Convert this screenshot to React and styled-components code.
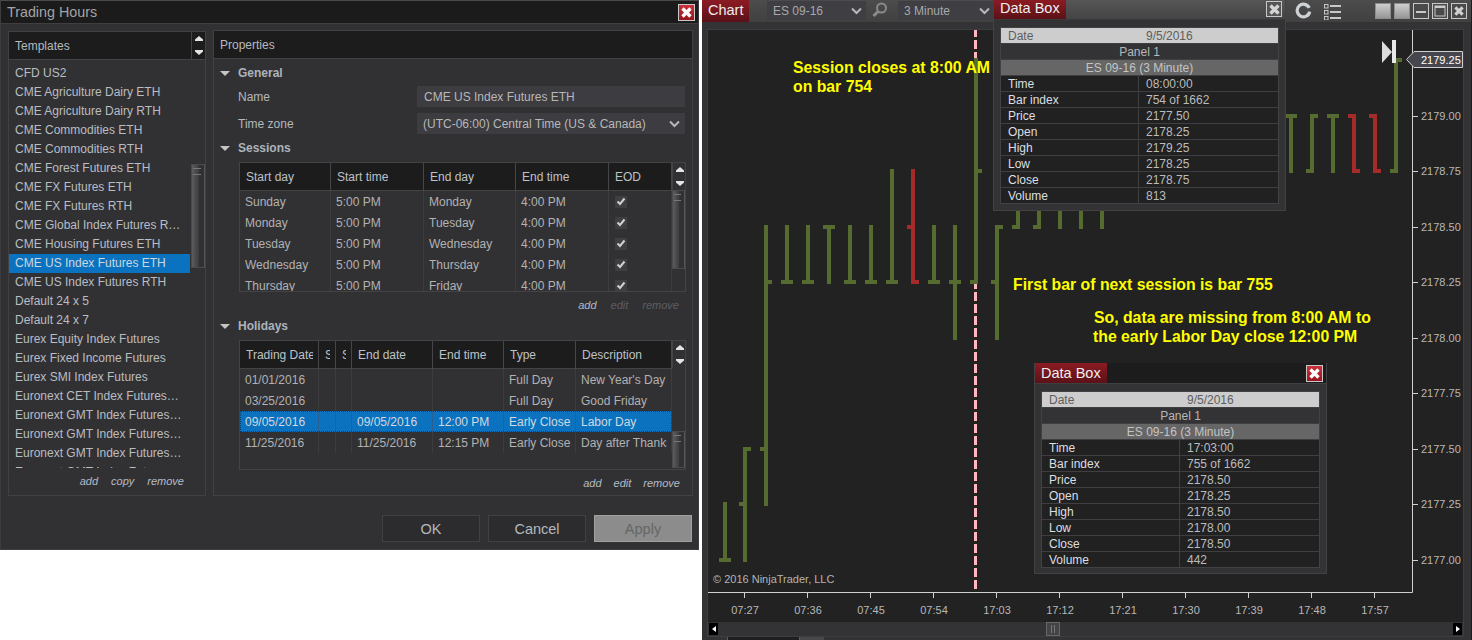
import React from 'react';
import styled, { createGlobalStyle } from 'styled-components';

const Global = createGlobalStyle`
  html, body { margin: 0; padding: 0; background: #fff; overflow: hidden; }
  body { font-family: "Liberation Sans", Arial, sans-serif; font-size: 12px; }
  * { box-sizing: border-box; }
`;

const Page = styled.div`
  display: flex; width: 1472px; height: 640px; gap: 3px; align-items: flex-start; background: #fff;
`;

/* ---------- dialog ---------- */
const Dialog = styled.div`
  width: 699px; height: 550px; background: #313134; display: flex; flex-direction: column;
  border: 1px solid #3d3d40; border-top-color: #4a4a4d;
`;
const TitleBar = styled.div`
  height: 23px; background: #1b1b1c; border-bottom: 1px solid #3f3f42; display: flex;
  align-items: center; justify-content: space-between; padding: 0 3px 0 6px;
  font-size: 14.3px; color: #a4a4a4;
`;
const CloseRed = styled.button`
  width: 17px; height: 17px; padding: 0; display: flex; align-items: center; justify-content: center;
  border: 1px solid #c9c9c9; background: linear-gradient(#c9303a, #98161f);
`;
const DialogBody = styled.div`
  display: flex; gap: 7px; padding: 6px 7px 0 7px; height: 468px; align-items: flex-start;
`;
const Panel = styled.div`
  border: 1px solid #414144; display: flex; flex-direction: column; flex: none; width: ${p => p.$w}px;
  height: ${p => p.$h}px; margin-top: ${p => p.$mt || 0}px;
`;
const PanelHead = styled.div`
  height: 28px; flex: none; background: #1c1c1d; border-bottom: 1px solid #434346; display: flex;
  align-items: center; justify-content: space-between; color: #b6babe; padding-left: 6px;
`;
const Spin = styled.div`
  width: 14px; height: 27px; border-left: 1px solid #434346; flex: none; display: flex;
  flex-direction: column; align-items: center; justify-content: center; gap: 9px;
`;
const TemplatesBody = styled.div`
  display: flex; height: 408px; flex: none;
`;
const TemplateList = styled.div`
  flex: 1; overflow: hidden; min-width: 0; padding: 4px 1px 0 0;
`;
const TemplateRow = styled.div`
  height: 19px; line-height: 18px; padding: 0 8px 0 6px; white-space: nowrap; overflow: hidden;
  text-overflow: ellipsis; color: ${p => (p.$sel ? '#cfd6de' : '#b9bdc1')};
  background: ${p => (p.$sel ? '#0b72c0' : 'transparent')};
`;
const ScrollCol = styled.div`
  width: ${p => p.$w || 14}px; flex: none; padding-top: ${p => p.$top}px;
`;
const Thumb = styled.div`
  height: ${p => p.$h}px; border: 1px solid #4a4a4d; border-right-color: #55555a; position: relative;
  background: linear-gradient(90deg, #5c5c5f, #3d3d40 55%, #313134 60%);
  &::before {
    content: ''; position: absolute; left: 1px; right: 3px; top: 3px; height: 5px;
    border-top: 1px solid #77777a; border-bottom: 1px solid #77777a;
  }
`;
const Links = styled.div`
  display: flex; justify-content: flex-end; align-items: center; height: ${p => p.$h}px; flex: none;
  gap: ${p => p.$gap}px; padding-right: ${p => p.$pr}px; font-size: 11px; font-style: italic;
`;
const LinkText = styled.span`
  color: ${p => (p.$off ? '#5e5e61' : '#b4bcc4')};
`;
const SectionLabel = styled.div`
  display: flex; align-items: center; height: ${p => p.$h}px; margin-top: ${p => p.$mt || 0}px; flex: none;
  padding-left: 6px; font-weight: bold; color: #adb3ba; gap: 8px;
`;
const Caret = styled.span`
  width: 0; height: 0; border-left: 5px solid transparent; border-right: 5px solid transparent;
  border-top: 5px solid #c4c4c4; flex: none;
`;
const FieldRow = styled.div`
  display: flex; align-items: center; height: 21px; margin-top: ${p => p.$mt}px; padding-left: 24px; flex: none;
  color: #b4b8bc;
`;
const FieldLabel = styled.div` width: 179px; flex: none; `;
const FieldBox = styled.div`
  width: 268px; height: 21px; background: #3c3c41; color: #b8b8b8; display: flex; align-items: center;
  justify-content: space-between; padding: 0 5px 0 ${p => p.$pl}px;
`;
const Table = styled.div`
  margin: ${p => p.$mt || 0}px 0 0 25px; width: 447px; height: 130px; border: 1px solid #434346; display: flex; flex: none;
`;
const TableMain = styled.div` width: 432px; flex: none; overflow: hidden; `;
const HeadRow = styled.div`
  display: grid; grid-template-columns: ${p => p.$cols}; height: 28px; background: #1c1c1d;
  border-bottom: 1px solid #434346;
`;
const HeadCell = styled.div`
  border-right: 1px solid #46464a; padding: 0 5px 0 6px; display: flex; align-items: center; color: #bcc2c8; min-width: 0;
`;
const Clip = styled.div` overflow: hidden; white-space: nowrap; width: 100%; `;
const BodyRow = styled.div`
  display: grid; grid-template-columns: ${p => p.$cols}; height: 21px;
  background: ${p => (p.$sel ? '#0b72c0' : 'transparent')};
  outline: ${p => (p.$sel ? '1px dotted #0a3f6c' : 'none')}; outline-offset: -1px;
`;
const BodyCell = styled.div`
  border-right: 1px solid ${p => (p.$sel ? '#2a5f8f' : '#3d3d40')}; padding: 0 4px 0 5px; display: flex; align-items: center;
  color: ${p => (p.$sel ? '#d2d8de' : '#b2b2b2')}; min-width: 0;
`;
const Check = styled.div`
  width: 12px; height: 12px; background: #3f3f43; margin-left: 1px; display: flex; align-items: center; justify-content: center;
`;
const TableScroll = styled.div` width: 13px; flex: none; display: flex; flex-direction: column; `;
const Footer = styled.div`
  display: flex; justify-content: flex-end; gap: 8px; padding: 23px 6px 0 0;
`;
const DlgButton = styled.div`
  width: 98px; height: 27px; display: flex; align-items: center; justify-content: center; font-size: 14.5px;
  border: 1px solid ${p => (p.$off ? '#a0a0a0' : '#414144')}; background: ${p => (p.$off ? '#8c8c8c' : '#2c2c2f')};
  color: ${p => (p.$off ? '#666' : '#b4b8bc')};
`;

/* ---------- chart window ---------- */
const ChartWindow = styled.div`
  position: relative; flex: 1; height: 640px; background: #333335; overflow: hidden;
  border-right: 1px solid #1e1e20;
`;
const Toolbar = styled.div`
  height: 22px; display: flex; align-items: flex-start; background: linear-gradient(#4c4c4d, #414142); padding-right: 4px;
`;
const RedTab = styled.div`
  height: ${p => p.$h}px; width: ${p => p.$w}px; flex: none; padding-left: 6px; color: #eee; font-size: 14.5px;
  line-height: ${p => p.$lh}px; background: linear-gradient(#8c1b23, #5b1117);
`;
const Select = styled.div`
  width: ${p => p.$w}px; height: 19px; margin: 1px 0 0 ${p => p.$ml}px; background: #3e3e43; color: #a8a8a8; flex: none;
  display: flex; align-items: center; justify-content: space-between; padding: 0 4px 0 6px;
`;
const IconSlot = styled.div` margin: 2px 0 0 ${p => p.$ml}px; flex: none; display: flex; `;
const RightTools = styled.div` margin-left: auto; display: flex; align-items: flex-start; gap: 3px; padding-top: 3px; `;
const ToolIcon = styled.div` margin: -1px ${p => p.$mr}px 0 0; flex: none; display: flex; `;
const WinBtn = styled.div`
  width: 16px; height: 16px; flex: none; display: flex; align-items: center; justify-content: center;
  border: 1px solid ${p => (p.$filled ? '#8d8d8d' : '#c8c8c8')};
  background: ${p => (p.$filled ? 'linear-gradient(#cdcdcd, #979797)' : '#4a4a4b')};
`;
const ChartFrame = styled.div`
  margin: 7px 5px 0 5px; border: 1px solid #3d3d40; border-bottom-width: 1px; width: 757px; height: 608px; background: #222;
`;
const ChartSvg = styled.svg` display: block; width: 755px; height: 592px; `;
const ScrollBar = styled.div`
  height: 14px; background: #333335; display: flex; align-items: center; padding: 0 1px;
`;
const ArrowBtn = styled.div`
  width: 9px; height: 12px; background: #000; flex: none; display: flex; align-items: center; justify-content: center;
  margin-left: ${p => (p.$auto ? 'auto' : '0')};
`;
const Handle = styled.div`
  width: 14px; height: 14px; margin-left: 328px; background: #444447; border: 1px solid #68686b; flex: none;
  display: flex; gap: 2px; align-items: center; justify-content: center;
  &::before, &::after { content: ''; width: 1px; height: 8px; background: #777; }
`;
const BottomStrip = styled.div`
  margin-left: 25px; display: flex; height: 4px;
`;
const StripDark = styled.div` width: 73px; background: #1f1f20; border-left: 1px solid #0b72c0; border-right: 1px solid #0b72c0; `;
const StripLight = styled.div` width: 24px; background: #47474a; `;
const Note = styled.div`
  position: absolute; left: ${p => p.$x}px; top: ${p => p.$y}px; color: #ff0; font-weight: bold; font-size: 15.8px;
  line-height: 19px; white-space: pre; text-indent: ${p => p.$indent || 0}px;
`;
const Copyright = styled.div`
  position: absolute; left: 11px; top: 573px; color: #b4b4b4; font-size: 11px; line-height: 13px;
`;
const BoxWrap = styled.div`
  position: absolute; left: ${p => p.$x}px; top: ${p => p.$y}px; width: 293px; height: 211px; background: #333335;
  border: 1px solid #424245; border-top: 0;
`;
const BoxHead = styled.div`
  height: ${p => p.$h}px; display: flex; justify-content: space-between; padding-right: 3px;
  background: ${p => (p.$dark ? '#1c1c1d' : 'linear-gradient(#565657, #444445)')};
  border-bottom: 1px solid ${p => (p.$dark ? '#3f3f42' : '#3a3a3b')};
`;
const GreyClose = styled.div`
  width: 16px; height: 16px; margin-top: 1px; border: 1px solid #c8c8c8; background: #555; display: flex;
  align-items: center; justify-content: center;
`;
const RedClose = styled(CloseRed)` margin-top: 2px; margin-right: 0; `;
const BoxTable = styled.div`
  margin: 7px 6px 0 6px; border: 1px solid #424245;
`;
const SpanRow = styled.div`
  height: 16px; line-height: 16px; background: ${p => p.$bg}; color: ${p => p.$fg}; text-align: center;
  border-bottom: 1px solid #3f3f42;
`;
const DateRow = styled.div`
  height: 16px; line-height: 16px; display: grid; grid-template-columns: 138px 1fr; background: #cdcdcd; color: #5e5e5e;
  padding-left: 7px; border-bottom: 1px solid #3f3f42;
`;
const DataRow = styled.div`
  height: 16px; line-height: 16px; display: grid; grid-template-columns: 138px 1fr; background: #212121;
  border-bottom: 1px solid #3f3f42;
  &:last-child { border-bottom: 0; height: 15px; }
`;
const DataKey = styled.div` padding-left: 7px; color: #dcdfe2; border-right: 1px solid #3f3f42; `;
const DataVal = styled.div` padding-left: 7px; color: #bcbcbc; `;

/* ---------- icons ---------- */
const X = ({ c = '#fff', s = 11 }) => (
  <svg width={s} height={s} viewBox="0 0 11 11"><path d="M1.5 1.5 9.5 9.5M9.5 1.5 1.5 9.5" stroke={c} strokeWidth="3.4" /></svg>
);
const Up = () => <svg width="8" height="5" viewBox="0 0 8 5"><path d="M4 0 8 3.5V5H0V3.5Z" fill="#e4e4e4" /></svg>;
const Down = () => <svg width="8" height="5" viewBox="0 0 8 5"><path d="M0 0H8V1.5L4 5 0 1.5Z" fill="#e4e4e4" /></svg>;
const Chevron = ({ c = '#b8b8b8' }) => (
  <svg width="11" height="8" viewBox="0 0 11 8"><path d="M1 1.5 5.5 6 10 1.5" fill="none" stroke={c} strokeWidth="2" /></svg>
);
const Tick = () => <svg width="10" height="9" viewBox="0 0 10 9"><path d="M1.5 4.5 4 7 8.5 1.5" fill="none" stroke="#d0d0d0" strokeWidth="2" /></svg>;
const SpinBox = () => <Spin><Up /><Down /></Spin>;
const SearchIcon = () => (
  <svg width="15" height="16" viewBox="0 0 15 16">
    <circle cx="9.5" cy="6" r="4.5" fill="none" stroke="#8a8a8a" strokeWidth="2" />
    <path d="M6 9.5 1.5 14" stroke="#8a8a8a" strokeWidth="3" />
  </svg>
);
const RefreshIcon = () => (
  <svg width="17" height="17" viewBox="0 0 17 17">
    <path d="M14.2 5.84A6.3 6.3 0 1 0 14.7 9.6" fill="none" stroke="#cdd2d6" strokeWidth="3.2" />
  </svg>
);
const ListIcon = () => (
  <svg width="17" height="18" viewBox="0 0 17 18">
    {[3, 9, 15].map(y => (
      <g key={y}>
        <rect x="0.5" y={y - 0.5} width="3.5" height="3.5" fill="none" stroke="#c8c8c8" />
        <rect x="6" y={y} width="11" height="2" fill="#c8c8c8" />
      </g>
    ))}
  </svg>
);

/* ---------- data ---------- */
const templates = ['CFD US2', 'CME Agriculture Dairy ETH', 'CME Agriculture Dairy RTH', 'CME Commodities ETH', 'CME Commodities RTH', 'CME Forest Futures ETH', 'CME FX Futures ETH', 'CME FX Futures RTH', 'CME Global Index Futures RTH', 'CME Housing Futures ETH', 'CME US Index Futures ETH', 'CME US Index Futures RTH', 'Default 24 x 5', 'Default 24 x 7', 'Eurex Equity Index Futures', 'Eurex Fixed Income Futures', 'Eurex SMI Index Futures', 'Euronext CET Index Futures ETH', 'Euronext GMT Index Futures ETH', 'Euronext GMT Index Futures RTH', 'Euronext GMT Index Futures US', 'Euronext GMT Index Futures'];
const sessCols = '91px 93px 92px 93px 63px';
const holCols = '79px 17px 16px 81px 71px 72px 96px';
const sessions = [['Sunday', 'Monday'], ['Monday', 'Tuesday'], ['Tuesday', 'Wednesday'], ['Wednesday', 'Thursday'], ['Thursday', 'Friday']];
const holidays = [
  ['01/01/2016', '', '', '', '', 'Full Day', "New Year's Day"],
  ['03/25/2016', '', '', '', '', 'Full Day', 'Good Friday'],
  ['09/05/2016', '', '', '09/05/2016', '12:00 PM', 'Early Close', 'Labor Day'],
  ['11/25/2016', '', '', '11/25/2016', '12:15 PM', 'Early Close', 'Day after Thanksgiving'],
];

const P = { h925: 58, h90: 114, h875: 169, h85: 225, h825: 280, h80: 336, h75: 447, h725: 502, h70: 558 };
const b = (x, hi, lo, o, c, red) => ({ x, hi, lo, o, c, red });
const { h925, h90, h875, h85, h825, h80, h75, h725, h70 } = P;
const bars = [
  b(723, h725, h70, h70, h70), b(743, h75, h70, h725, h75), b(764, h85, h725, h75, h825),
  b(785, h85, h825, h825, h825), b(806, h85, h825, h825, h825), b(827, h85, h825, h85, h85),
  b(848, h85, h825, h825, h825), b(869, h85, h825, h825, h825), b(890, h875, h825, h825, h825),
  b(911, h875, h825, h85, h825, true), b(932, h85, h825, h825, h825), b(953, h85, h80, h825, h825),
  b(974, h925, h825, h825, h875), b(995, h85, h80, h825, h85), b(1016, h90, h85, h85), b(1037, h90, h85, h85),
  b(1058, h90, h85), b(1079, h90, h85), b(1100, h90, h85),
  b(1289, h90, h875, h90, h90), b(1310, h90, h875, h875, h90), b(1331, h90, h875, h90, h90),
  b(1352, h90, h875, h90, h875, true), b(1373, h90, h875, h90, h875, true), b(1394, h925, h875, h875, h925),
];
const prices = [['2179.00', 116], ['2178.75', 171], ['2178.50', 227], ['2178.25', 282], ['2178.00', 338], ['2177.75', 393], ['2177.50', 449], ['2177.25', 504], ['2177.00', 560]];
const times = ['07:27', '07:36', '07:45', '07:54', '17:03', '17:12', '17:21', '17:30', '17:39', '17:48', '17:57'];

const Chart = () => (
  <ChartSvg viewBox="708 30 755 592" fontFamily='"Liberation Sans", Arial, sans-serif' fontSize="11">
    <line x1="975.5" y1="28" x2="975.5" y2="589" stroke="#ffb6c1" strokeWidth="3" strokeDasharray="9 3" />
    {bars.map(({ x, hi, lo, o, c, red }) => {
      const col = red ? '#a52a2a' : '#556b2f';
      return (
        <g key={x} fill={col}>
          <rect x={x} y={hi} width="4" height={lo + 4 - hi} />
          {o != null && <rect x={x - 4} y={o} width="4" height="4" />}
          {c != null && <rect x={x + 4} y={c} width="4" height="4" />}
        </g>
      );
    })}
    <path d="M1412.5 30V592.5H708" fill="none" stroke="#d0d0d0" />
    {prices.map(([t, y]) => (
      <g key={t}>
        <line x1="1413" y1={y + 0.5} x2="1418" y2={y + 0.5} stroke="#d0d0d0" />
        <text x="1421" y={y + 4} fill="#b8b8b8">{t}</text>
      </g>
    ))}
    {times.map((t, i) => (
      <g key={t}>
        <line x1={744.5 + 63 * i} y1="593" x2={744.5 + 63 * i} y2="598" stroke="#d0d0d0" />
        <text x={745 + 63 * i} y="614" fill="#b8b8b8" textAnchor="middle">{t}</text>
      </g>
    ))}
    <path d="M1382 41 1392 52 1382 63Z" fill="#dcdcdc" />
    <rect x="1392" y="40" width="4" height="23" fill="#e8e8e8" />
    <path d="M1406.5 59.5 1414 51.5H1462.5V67.5H1414Z" fill="#46464e" stroke="#cfcfcf" />
    <text x="1421" y="64" fill="#fff">2179.25</text>
  </ChartSvg>
);

const DataBox = ({ x, y, dark, vals, date, close }) => (
  <BoxWrap $x={x} $y={y}>
    <BoxHead $h={dark ? 21 : 20} $dark={dark}>
      <RedTab $w={72} $h={dark ? 20 : 19} $lh={dark ? 20 : 17}>Data Box</RedTab>
      {close}
    </BoxHead>
    <BoxTable>
      <DateRow><span>Date</span><span>{date}</span></DateRow>
      <SpanRow $bg="#333335" $fg="#b8b8b8">Panel 1</SpanRow>
      <SpanRow $bg="#666" $fg="#c4c4c4">ES 09-16 (3 Minute)</SpanRow>
      {['Time', 'Bar index', 'Price', 'Open', 'High', 'Low', 'Close', 'Volume'].map((k, i) => (
        <DataRow key={k}><DataKey>{k}</DataKey><DataVal>{vals[i]}</DataVal></DataRow>
      ))}
    </BoxTable>
  </BoxWrap>
);

export default function App() {
  return (
    <Page>
      <Global />
      <Dialog>
        <TitleBar>Trading Hours<CloseRed><X /></CloseRed></TitleBar>
        <DialogBody>
          <Panel $w={198} $h={465} $mt={1}>
            <PanelHead>Templates<SpinBox /></PanelHead>
            <TemplatesBody>
              <TemplateList>
                {templates.map((t, i) => <TemplateRow key={i} $sel={t === 'CME US Index Futures ETH'}>{t}</TemplateRow>)}
              </TemplateList>
              <ScrollCol $top={104}><Thumb $h={104} /></ScrollCol>
            </TemplatesBody>
            <Links $h={26} $gap={13} $pr={21}><LinkText>add</LinkText><LinkText>copy</LinkText><LinkText>remove</LinkText></Links>
          </Panel>
          <Panel $w={480} $h={466}>
            <PanelHead>Properties</PanelHead>
            <SectionLabel $h={26} $mt={1}><Caret />General</SectionLabel>
            <FieldRow $mt={0}><FieldLabel>Name</FieldLabel><FieldBox $pl={7}>CME US Index Futures ETH</FieldBox></FieldRow>
            <FieldRow $mt={6}><FieldLabel>Time zone</FieldLabel><FieldBox $pl={6}>(UTC-06:00) Central Time (US &amp; Canada)<Chevron /></FieldBox></FieldRow>
            <SectionLabel $h={26} $mt={1}><Caret />Sessions</SectionLabel>
            <Table $mt={1}>
              <TableMain>
                <HeadRow $cols={sessCols}>{['Start day', 'Start time', 'End day', 'End time', 'EOD'].map(h => <HeadCell key={h}><Clip>{h}</Clip></HeadCell>)}</HeadRow>
                {sessions.map(([s, e]) => (
                  <BodyRow key={s} $cols={sessCols}>
                    <BodyCell><Clip>{s}</Clip></BodyCell><BodyCell><Clip>5:00 PM</Clip></BodyCell><BodyCell><Clip>{e}</Clip></BodyCell><BodyCell><Clip>4:00 PM</Clip></BodyCell>
                    <BodyCell><Check><Tick /></Check></BodyCell>
                  </BodyRow>
                ))}
              </TableMain>
              <TableScroll><SpinBox /><Thumb $h={79} /></TableScroll>
            </Table>
            <Links $h={26} $gap={14} $pr={13}><LinkText>add</LinkText><LinkText $off>edit</LinkText><LinkText $off>remove</LinkText></Links>
            <SectionLabel $h={16}><Caret />Holidays</SectionLabel>
            <Table $mt={6}>
              <TableMain>
                <HeadRow $cols={holCols}>{['Trading Date', 'S', 'S', 'End date', 'End time', 'Type', 'Description'].map((h, i) => <HeadCell key={i}><Clip>{h}</Clip></HeadCell>)}</HeadRow>
                {holidays.map((r, j) => (
                  <BodyRow key={j} $cols={holCols} $sel={j === 2}>
                    {r.map((c, i) => <BodyCell key={i} $sel={j === 2}><Clip>{c}</Clip></BodyCell>)}
                  </BodyRow>
                ))}
              </TableMain>
              <TableScroll><SpinBox /><ScrollCol $top={63} $w={13}><Thumb $h={37} /></ScrollCol></TableScroll>
            </Table>
            <Links $h={26} $gap={12} $pr={12}><LinkText>add</LinkText><LinkText>edit</LinkText><LinkText>remove</LinkText></Links>
          </Panel>
        </DialogBody>
        <Footer>
          <DlgButton>OK</DlgButton><DlgButton>Cancel</DlgButton><DlgButton $off>Apply</DlgButton>
        </Footer>
      </Dialog>

      <ChartWindow>
        <Toolbar>
          <RedTab $w={47} $h={22} $lh={20}>Chart</RedTab>
          <Select $w={99} $ml={18}>ES 09-16<Chevron /></Select>
          <IconSlot $ml={6}><SearchIcon /></IconSlot>
          <Select $w={96} $ml={11}>3 Minute<Chevron /></Select>
          <RightTools>
            <ToolIcon $mr={9}><RefreshIcon /></ToolIcon><ToolIcon $mr={31}><ListIcon /></ToolIcon>
            <WinBtn $filled /><WinBtn $filled />
            <WinBtn><svg width="10" height="3"><rect width="10" height="2" y="1" fill="#c8c8c8" /></svg></WinBtn>
            <WinBtn><svg width="12" height="12"><rect x="1" y="1" width="10" height="10" fill="none" stroke="#c8c8c8" /><rect x="1" y="1" width="10" height="2" fill="#c8c8c8" /></svg></WinBtn>
            <WinBtn><X c="#d0d0d0" s={10} /></WinBtn>
          </RightTools>
        </Toolbar>
        <ChartFrame>
          <Chart />
          <ScrollBar>
            <ArrowBtn><svg width="4" height="6"><path d="M4 0V6L0 3Z" fill="#fff" /></svg></ArrowBtn>
            <Handle />
            <ArrowBtn $auto><svg width="4" height="6"><path d="M0 0V6L4 3Z" fill="#fff" /></svg></ArrowBtn>
          </ScrollBar>
        </ChartFrame>
        <BottomStrip><StripDark /><StripLight /></BottomStrip>

        <Note $x={91} $y={58}>{'Session closes at 8:00 AM\non bar 754'}</Note>
        <Note $x={311} $y={275}>First bar of next session is bar 755</Note>
        <Note $x={391} $y={308} $indent={1}>{'So, data are missing from 8:00 AM to\nthe early Labor Day close 12:00 PM'}</Note>
        <Copyright>© 2016 NinjaTrader, LLC</Copyright>

        <DataBox x={291} y={0} date="9/5/2016"
          vals={['08:00:00', '754 of 1662', '2177.50', '2178.25', '2179.25', '2178.25', '2178.75', '813']}
          close={<GreyClose><X c="#d4d4d4" /></GreyClose>} />
        <DataBox x={332} y={363} dark date="9/5/2016"
          vals={['17:03:00', '755 of 1662', '2178.50', '2178.25', '2178.50', '2178.00', '2178.50', '442']}
          close={<RedClose><X /></RedClose>} />
      </ChartWindow>
    </Page>
  );
}
